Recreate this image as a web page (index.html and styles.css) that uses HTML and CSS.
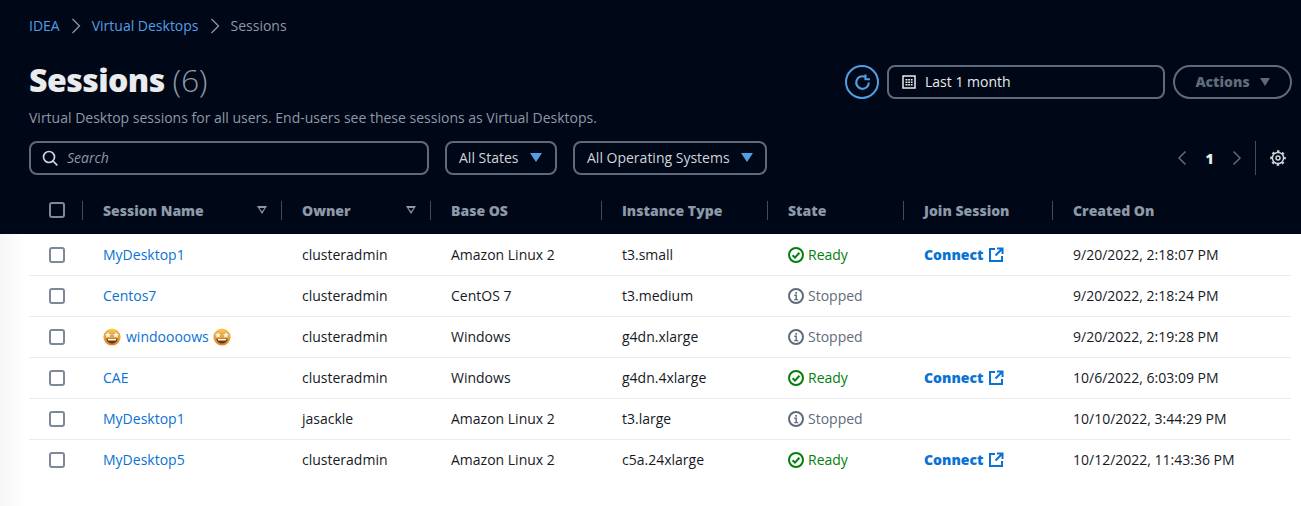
FILE: index.html
```html
<!DOCTYPE html>
<html lang="en">
<head>
<meta charset="utf-8">
<title>Sessions</title>
<link rel="stylesheet" href="styles.css">
</head>
<body>
<svg class="defs" width="0" height="0">
  <defs>
    <linearGradient id="face" x1="0" y1="0" x2="0" y2="1"><stop offset="0" stop-color="#fbcb4f"/><stop offset="1" stop-color="#dc7f26"/></linearGradient>
    <symbol id="ready" viewBox="0 0 16 16"><circle cx="8" cy="8" r="7" fill="none" stroke="currentColor" stroke-width="2"/><path d="M4.600 8.200 7 10.600l4.400-4.800" fill="none" stroke="currentColor" stroke-width="2"/></symbol>
    <symbol id="stopped" viewBox="0 0 16 16"><circle cx="8" cy="8" r="7" fill="none" stroke="currentColor" stroke-width="2"/><path d="M6.300 7.300H8.200V11.600M6.200 11.600h4" fill="none" stroke="currentColor" stroke-width="1.400"/><rect x="7.300" y="4" width="1.700" height="1.700" fill="currentColor"/></symbol>
    <symbol id="external" viewBox="0 0 16 16"><path d="M7 2H2v12h12V9M9 1.500h5.500V7M14.200 1.800 7.500 8.500" fill="none" stroke="currentColor" stroke-width="2"/></symbol>
    <symbol id="star" viewBox="0 0 18 18">
      <circle cx="9" cy="9" r="8.600" fill="url(#face)"/>
      <path d="M3.200 10.700h11.600c-.6 3-3 4.700-5.800 4.700s-5.200-1.700-5.800-4.700z" fill="#6b3a12"/>
      <path d="M4.600 11.100h8.800l-.6 1.400H5.200z" fill="#fff"/>
      <path d="m5 3.200 1.200 2.400 2.600.3-1.900 1.800.5 2.600L5 9.100l-2.400 1.200.5-2.600L1.200 5.900l2.600-.3zM13 3.200l1.200 2.400 2.600.3-1.900 1.800.5 2.600L13 9.100l-2.400 1.200.5-2.600-1.900-1.800 2.600-.3z" fill="#fbf3e0" stroke="#b8741e" stroke-width=".4"/>
    </symbol>
  </defs>
</svg>
<div class="page">
  <header class="top">
    <nav class="crumbs">
      <a class="crumb-link">IDEA</a>
      <svg class="crumb-sep" viewBox="0 0 16 16"><path d="m4.500 1 7 7-7 7" fill="none" stroke="currentColor" stroke-width="1.300"/></svg>
      <a class="crumb-link">Virtual Desktops</a>
      <svg class="crumb-sep" viewBox="0 0 16 16"><path d="m4.500 1 7 7-7 7" fill="none" stroke="currentColor" stroke-width="1.300"/></svg>
      <span class="crumb-current">Sessions</span>
    </nav>
    <div class="title-row">
      <div class="title-block">
        <h1 class="title">Sessions <span class="count">(6)</span></h1>
        <p class="desc">Virtual Desktop sessions for all users. End-users see these sessions as Virtual Desktops.</p>
      </div>
      <div class="actions">
        <button class="refresh">
          <svg viewBox="0 0 16 16" width="17" height="17"><path d="M13.900 8A5.900 5.900 0 1 1 10.500 2.700" fill="none" stroke="currentColor" stroke-width="2"/><path d="M10.800.5v4.400H15" fill="none" stroke="currentColor" stroke-width="2"/></svg>
        </button>
        <div class="date-box">
          <svg class="cal" viewBox="0 0 14 14" width="14" height="14"><rect x="1" y="1" width="12" height="12" fill="none" stroke="currentColor" stroke-width="1.500"/><path d="M3.500 4h2v1.500h-2zM6.200 4h2v1.500h-2zM9 4h1.600v1.500H9zM3.500 6.500h2V8h-2zM6.200 6.500h2V8h-2zM9 6.500h1.600V8H9zM3.500 9h2v1.500h-2zM6.200 9h2v1.500h-2zM9 9h1.600v1.500H9z" fill="currentColor"/></svg>
          <span>Last 1 month</span>
        </div>
        <button class="actions-btn">Actions <span class="caret caret-grey"></span></button>
      </div>
    </div>
    <div class="filter-row">
      <div class="search">
        <svg viewBox="0 0 16 16" width="16" height="16"><circle cx="7" cy="7" r="5.500" fill="none" stroke="currentColor" stroke-width="1.700"/><path d="m11 11 4.300 4.300" fill="none" stroke="currentColor" stroke-width="1.700"/></svg>
        <span class="search-ph">Search</span>
      </div>
      <div class="select select-state">All States <span class="caret"></span></div>
      <div class="select select-os">All Operating Systems <span class="caret"></span></div>
      <div class="pager">
        <svg class="pager-arrow" viewBox="0 0 10 16"><path d="M8.500 1.500 2 8l6.500 6.500" fill="none" stroke="currentColor" stroke-width="1.500"/></svg>
        <span class="page-num">1</span>
        <svg class="pager-arrow" viewBox="0 0 10 16"><path d="M1.500 1.500 8 8l-6.500 6.500" fill="none" stroke="currentColor" stroke-width="1.500"/></svg>
        <span class="pager-div"></span>
        <svg class="gear" viewBox="0 0 16 16" width="16" height="16"><circle cx="8" cy="8" r="5.600" fill="none" stroke="currentColor" stroke-width="1.500"/><circle cx="8" cy="8" r="6.900" fill="none" stroke="currentColor" stroke-width="1.800" stroke-dasharray="2.600 2.820" stroke-dashoffset="1.300"/><circle cx="8" cy="8" r="2" fill="none" stroke="currentColor" stroke-width="1.500"/></svg>
      </div>
    </div>
    <div class="grid head-row">
      <div class="cell-check"><span class="box box-dark"></span></div>
      <div class="th sortable">Session Name <span class="sort"></span></div>
      <div class="th sortable">Owner <span class="sort"></span></div>
      <div class="th">Base OS</div>
      <div class="th">Instance Type</div>
      <div class="th">State</div>
      <div class="th">Join Session</div>
      <div class="th">Created On</div>
    </div>
  </header>
  <main class="rows">
    <div class="grid row">
      <div class="cell-check"><span class="box"></span></div>
      <div class="td"><a class="link">MyDesktop1</a></div>
      <div class="td">clusteradmin</div>
      <div class="td">Amazon Linux 2</div>
      <div class="td">t3.small</div>
      <div class="td ready"><svg class="status"><use href="#ready"/></svg>Ready</div>
      <div class="td"><a class="connect">Connect<svg class="ext"><use href="#external"/></svg></a></div>
      <div class="td">9/20/2022, 2:18:07 PM</div>
    </div>
    <div class="grid row">
      <div class="cell-check"><span class="box"></span></div>
      <div class="td"><a class="link">Centos7</a></div>
      <div class="td">clusteradmin</div>
      <div class="td">CentOS 7</div>
      <div class="td">t3.medium</div>
      <div class="td stopped"><svg class="status"><use href="#stopped"/></svg>Stopped</div>
      <div class="td"></div>
      <div class="td">9/20/2022, 2:18:24 PM</div>
    </div>
    <div class="grid row">
      <div class="cell-check"><span class="box"></span></div>
      <div class="td"><a class="link"><svg class="emoji emoji-l"><use href="#star"/></svg>windoooows<svg class="emoji emoji-r"><use href="#star"/></svg></a></div>
      <div class="td">clusteradmin</div>
      <div class="td">Windows</div>
      <div class="td">g4dn.xlarge</div>
      <div class="td stopped"><svg class="status"><use href="#stopped"/></svg>Stopped</div>
      <div class="td"></div>
      <div class="td">9/20/2022, 2:19:28 PM</div>
    </div>
    <div class="grid row">
      <div class="cell-check"><span class="box"></span></div>
      <div class="td"><a class="link">CAE</a></div>
      <div class="td">clusteradmin</div>
      <div class="td">Windows</div>
      <div class="td">g4dn.4xlarge</div>
      <div class="td ready"><svg class="status"><use href="#ready"/></svg>Ready</div>
      <div class="td"><a class="connect">Connect<svg class="ext"><use href="#external"/></svg></a></div>
      <div class="td">10/6/2022, 6:03:09 PM</div>
    </div>
    <div class="grid row">
      <div class="cell-check"><span class="box"></span></div>
      <div class="td"><a class="link">MyDesktop1</a></div>
      <div class="td">jasackle</div>
      <div class="td">Amazon Linux 2</div>
      <div class="td">t3.large</div>
      <div class="td stopped"><svg class="status"><use href="#stopped"/></svg>Stopped</div>
      <div class="td"></div>
      <div class="td">10/10/2022, 3:44:29 PM</div>
    </div>
    <div class="grid row row-last">
      <div class="cell-check"><span class="box"></span></div>
      <div class="td"><a class="link">MyDesktop5</a></div>
      <div class="td">clusteradmin</div>
      <div class="td">Amazon Linux 2</div>
      <div class="td">c5a.24xlarge</div>
      <div class="td ready"><svg class="status"><use href="#ready"/></svg>Ready</div>
      <div class="td"><a class="connect">Connect<svg class="ext"><use href="#external"/></svg></a></div>
      <div class="td">10/12/2022, 11:43:36 PM</div>
    </div>
  </main>
</div>
</body>
</html>
```
FILE: styles.css
```css
* { box-sizing: border-box; }
html, body { margin: 0; height: 100%; }
body {
  font-family: "Open Sans", "Noto Sans", sans-serif;
  font-size: 14px;
  color: #16191f;
  overflow: hidden;
  background: linear-gradient(90deg, #f6f6f6 0, #fff 26px);
}
.defs { position: absolute; }
.page { width: 1301px; height: 506px; }
.top {
  height: 234px;
  background: #000716;
  padding: 0 9px 0 29px;
  display: flex;
  flex-direction: column;
}
.crumbs {
  height: 20px;
  margin-top: 16px;
  display: flex;
  align-items: center;
  font-size: 14px;
  line-height: 20px;
}
.crumb-link { color: #539fe5; }
.crumb-current { color: #8d99a8; }
.crumb-sep { width: 16px; height: 16px; margin: 0 8px 0 8px; color: #8d99a8; }
.title-row { display: flex; justify-content: space-between; margin-top: 22px; height: 82px; }
.title {
  margin: 0;
  font-size: 32px;
  line-height: 44px;
  font-weight: 800;
  color: #e9ebed;
  letter-spacing: -0.55px;
}
.count { font-weight: 300; color: #8d99a8; letter-spacing: -0.3px; }
.desc { margin: 6px 0 0; font-size: 14px; line-height: 20px; color: #8d99a8; white-space: nowrap; }
.actions { display: flex; align-items: flex-start; padding-top: 7px; }
.refresh {
  width: 34px;
  height: 34px;
  border: 2px solid #539fe5;
  border-radius: 50%;
  background: none;
  color: #539fe5;
  padding: 0;
  display: flex;
  align-items: center;
  justify-content: center;
}
.date-box {
  width: 278px;
  height: 34px;
  margin: 0 8px 0 8px;
  border: 2px solid #5f6b7a;
  border-radius: 8px;
  display: flex;
  align-items: center;
  padding: 0 0 1px 13px;
  color: #e9ebed;
  gap: 9px;
}
.cal { color: #e9ebed; }
.actions-btn {
  width: 119px;
  height: 34px;
  border: 2px solid #5f6b7a;
  border-radius: 17px;
  background: none;
  color: #5f6b7a;
  font: 800 14px "Open Sans", sans-serif;
  display: flex;
  align-items: center;
  justify-content: center;
  gap: 10px;
  padding: 0 0 1px 0;
}
.caret {
  display: inline-block;
  width: 0;
  height: 0;
  border-left: 6px solid transparent;
  border-right: 6px solid transparent;
  border-top: 9px solid #539fe5;
}
.caret-grey { border-left-width: 5px; border-right-width: 5px; border-top: 8px solid #5f6b7a; }
.filter-row { display: flex; align-items: center; height: 36px; }
.search {
  width: 400px;
  height: 34px;
  border: 2px solid #5f6b7a;
  border-radius: 8px;
  display: flex;
  align-items: center;
  padding: 0 0 1px 11px;
  color: #d1d5db;
  gap: 9px;
  margin-right: 16px;
}
.search-ph { font-style: italic; color: #8d99a8; font-size: 14px; }
.select {
  height: 34px;
  border: 2px solid #5f6b7a;
  border-radius: 8px;
  display: flex;
  align-items: center;
  color: #d1d5db;
  padding: 0 0 1px 12px;
  gap: 11px;
}
.select-state { width: 112px; margin-right: 16px; }
.select-os { width: 194px; }
.pager { margin-left: auto; display: flex; align-items: center; height: 34px; padding-right: 6px; }
.pager-arrow { width: 10px; height: 16px; color: #5f6b7a; }
.page-num { color: #e9ebed; font-weight: 800; font-size: 14px; width: 45px; text-align: center; }
.pager-div { width: 1px; height: 34px; background: #414d5c; margin: 0 14px 0 13px; }
.gear { color: #d1d5db; }
.grid {
  display: grid;
  grid-template-columns: 53px 199px 149px 171px 166px 136px 149px 89px;
}
.head-row { margin-top: 24px; height: 20px; align-items: center; }
.cell-check { display: flex; align-items: center; padding-left: 20px; }
.box { display: block; width: 16px; height: 16px; border: 2px solid #7d8998; border-radius: 3px; background: #fff; }
.box-dark { background: none; }
.th {
  height: 19px;
  border-left: 1px solid #414d5c;
  padding-left: 20px;
  padding-right: 14px;
  color: #8d99a8;
  font-weight: 800;
  font-size: 14px;
  line-height: 19px;
  white-space: nowrap;
}
.sortable { display: flex; justify-content: space-between; align-items: center; }
.sort {
  width: 10px;
  height: 8px;
  clip-path: polygon(0 0, 100% 0, 50% 100%);
  position: relative;
  background-color: #8d99a8;
}
.sort::after {
  content: "";
  position: absolute;
  left: 2px;
  top: 1.500px;
  width: 6px;
  height: 4px;
  background: #000716;
  clip-path: polygon(0 0, 100% 0, 50% 100%);
}
.rows { padding: 1px 10px 0 29px; }
.row {
  height: 41px;
  border-bottom: 1px solid #e9ebed;
  align-items: center;
}
.row-last { border-bottom-color: transparent; }
.td { padding-left: 21px; line-height: 20px; white-space: nowrap; display: flex; align-items: center; }
.link { color: #0972d3; display: flex; align-items: center; }
.ready { color: #037f0c; }
.stopped { color: #5f6b7a; }
.status { width: 16px; height: 16px; margin-right: 4px; }
.connect { color: #0972d3; font-weight: 800; display: flex; align-items: center; }
.ext { width: 16px; height: 16px; margin-left: 5px; }
.emoji { width: 18px; height: 18px; }
.emoji-l { margin-right: 5px; }
.emoji-r { margin-left: 4px; }
```
